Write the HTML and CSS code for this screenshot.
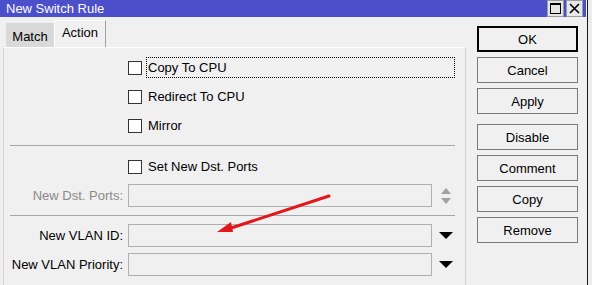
FILE: index.html
```html
<!DOCTYPE html>
<html lang="en">
<head>
  <meta charset="UTF-8">
  <title>New Switch Rule</title>
  <link rel="stylesheet" href="styles.css">
</head>
<body>
  <div class="window">
    <div class="titlebar">
      <span class="titlebar__text">New Switch Rule</span>
      <div class="titlebar__btns">
        <span class="tbtn"><svg width="13" height="13" viewBox="0 0 13 13"><rect x="1.5" y="1.5" width="10" height="10" fill="none" stroke="#000"/><rect x="1" y="1" width="11" height="2" fill="#000"/></svg></span>
        <span class="tbtn"><svg width="13" height="13" viewBox="0 0 13 13"><path d="M2 2 L11 11 M11 2 L2 11" stroke="#000" stroke-width="1.6"/></svg></span>
      </div>
    </div>
    <div class="body">
      <div class="left">
        <div class="tabs">
          <span class="tab">Match</span>
          <span class="tab tab--active">Action</span>
        </div>
        <div class="panel">
          <div class="row row--first">
            <span class="check"></span>
            <span class="check-label check-label--focus">Copy To CPU</span>
          </div>
          <div class="row">
            <span class="check"></span>
            <span class="check-label">Redirect To CPU</span>
          </div>
          <div class="row">
            <span class="check"></span>
            <span class="check-label">Mirror</span>
          </div>
          <div class="sep sep--a"></div>
          <div class="row row--dst">
            <span class="check"></span>
            <span class="check-label">Set New Dst. Ports</span>
          </div>
          <div class="field field--ports">
            <span class="field__label field__label--disabled">New Dst. Ports:</span>
            <span class="field__input"></span>
            <span class="field__icon">
              <svg width="12" height="18" viewBox="0 0 12 18"><path d="M6 1 L11 7 L1 7 Z" fill="#a0a0a0"/><path d="M1 11 L11 11 L6 17 Z" fill="#a0a0a0"/></svg>
            </span>
          </div>
          <div class="sep sep--b"></div>
          <div class="field field--vlan">
            <span class="field__label">New VLAN ID:</span>
            <span class="field__input"></span>
            <span class="field__icon">
              <svg width="14" height="8" viewBox="0 0 14 8"><path d="M0 0 L14 0 L7 7 Z" fill="#000"/></svg>
            </span>
          </div>
          <div class="field field--prio">
            <span class="field__label">New VLAN Priority:</span>
            <span class="field__input"></span>
            <span class="field__icon">
              <svg width="14" height="8" viewBox="0 0 14 8"><path d="M0 0 L14 0 L7 7 Z" fill="#000"/></svg>
            </span>
          </div>
        </div>
      </div>
      <div class="actions">
        <button class="btn btn--default">OK</button>
        <button class="btn">Cancel</button>
        <button class="btn">Apply</button>
        <button class="btn btn--group">Disable</button>
        <button class="btn">Comment</button>
        <button class="btn">Copy</button>
        <button class="btn">Remove</button>
      </div>
    </div>
    <svg class="pointer" width="592" height="285" viewBox="0 0 592 285">
      <path d="M329 196 L228 229" stroke="#e3161b" stroke-width="3" stroke-linecap="round"/>
      <path d="M217 232 L231 222 L233 232 Z" fill="#e3161b"/>
    </svg>
  </div>
</body>
</html>
```

FILE: styles.css
```css
* { box-sizing: border-box; }
body {
  margin: 0;
  background: #ececec;
  font-family: 'Liberation Sans', Arial, sans-serif;
  font-size: 13px;
  color: #000;
  overflow: hidden;
}
.window {
  position: relative;
  width: 588px;
  height: 285px;
  background: #f0f0f0;
  border-right: 1px solid #1a1a1a;
}
.titlebar {
  height: 17px;
  background: #4b4fc9;
  display: flex;
  align-items: center;
  justify-content: space-between;
  margin-right: 1px;
}
.titlebar__text {
  color: #fff;
  padding-left: 6px;
  line-height: 17px;
}
.titlebar__btns {
  display: flex;
  gap: 2px;
  margin-right: 3px;
  align-self: flex-start;
}
.tbtn {
  width: 17px;
  height: 17px;
  background: #e6e6e6;
  border: 1px solid #9a9a9a;
  display: flex;
  align-items: center;
  justify-content: center;
}
.body {
  display: flex;
  height: 268px;
}
.left {
  width: 466px;
  padding-left: 3px;
  display: flex;
  flex-direction: column;
}
.tabs {
  height: 30px;
  display: flex;
  align-items: flex-end;
  padding-left: 3px;
}
.tab {
  height: 24px;
  width: 48px;
  background: #d9d9d9;
  display: flex;
  align-items: center;
  justify-content: center;
  padding-top: 2px;
}
.tab--active {
  height: 27px;
  width: 52px;
  background: #f0f0f0;
  border-top: 1px solid #fff;
  border-left: 1px solid #fff;
  border-right: 1px solid #a0a0a0;
  padding-top: 0;
  padding-bottom: 4px;
}
.panel {
  flex: 1;
  border: 1px solid #d4d4d4;
  border-top-color: #fff;
  border-bottom: none;
  padding: 5px 10px 0 0;
  display: flex;
  flex-direction: column;
}
.row {
  height: 29px;
  display: flex;
  align-items: center;
  padding-left: 124px;
}
.check {
  width: 14px;
  height: 14px;
  background: #fff;
  border: 1px solid #333;
  flex: none;
}
.check-label {
  margin-left: 4px;
  padding: 2px 0 2px 1px;
  border: 1px solid transparent;
  flex: 1;
}
.check-label--focus {
  border: 1px dotted #000;
}
.sep {
  height: 1px;
  background: #a7a7a7;
  margin-left: 6px;
}
.sep--a { margin-top: 5px; }
.row--dst { margin-top: 6px; }
.field {
  display: flex;
  align-items: center;
  height: 23px;
}
.field--ports { margin-top: 3px; }
.sep--b { margin-top: 8px; }
.field--vlan { margin-top: 8px; }
.field--prio { margin-top: 6px; }
.field__label {
  width: 119px;
  margin-right: 5px;
  text-align: right;
  white-space: nowrap;
}
.field__label--disabled {
  color: #8a8a8a;
}
.field__input {
  width: 304px;
  height: 23px;
  border: 1px solid #b0b0b0;
  background: #f0f0f0;
}
.field__icon {
  flex: 1;
  display: flex;
  justify-content: center;
  align-items: center;
  padding-left: 4px;
}
.actions {
  padding: 9px 0 0 11px;
  display: flex;
  flex-direction: column;
  gap: 5px;
}
.btn {
  width: 101px;
  height: 26px;
  background: #f0f0f0;
  border: 1px solid #7a7a7a;
  font-family: 'Liberation Sans', Arial, sans-serif;
  font-size: 13px;
  color: #000;
  padding: 0;
}
.btn--default {
  border: 2px solid #000;
}
.btn--group {
  margin-top: 5px;
}
.pointer {
  position: absolute;
  left: 0;
  top: 0;
  pointer-events: none;
}
```
